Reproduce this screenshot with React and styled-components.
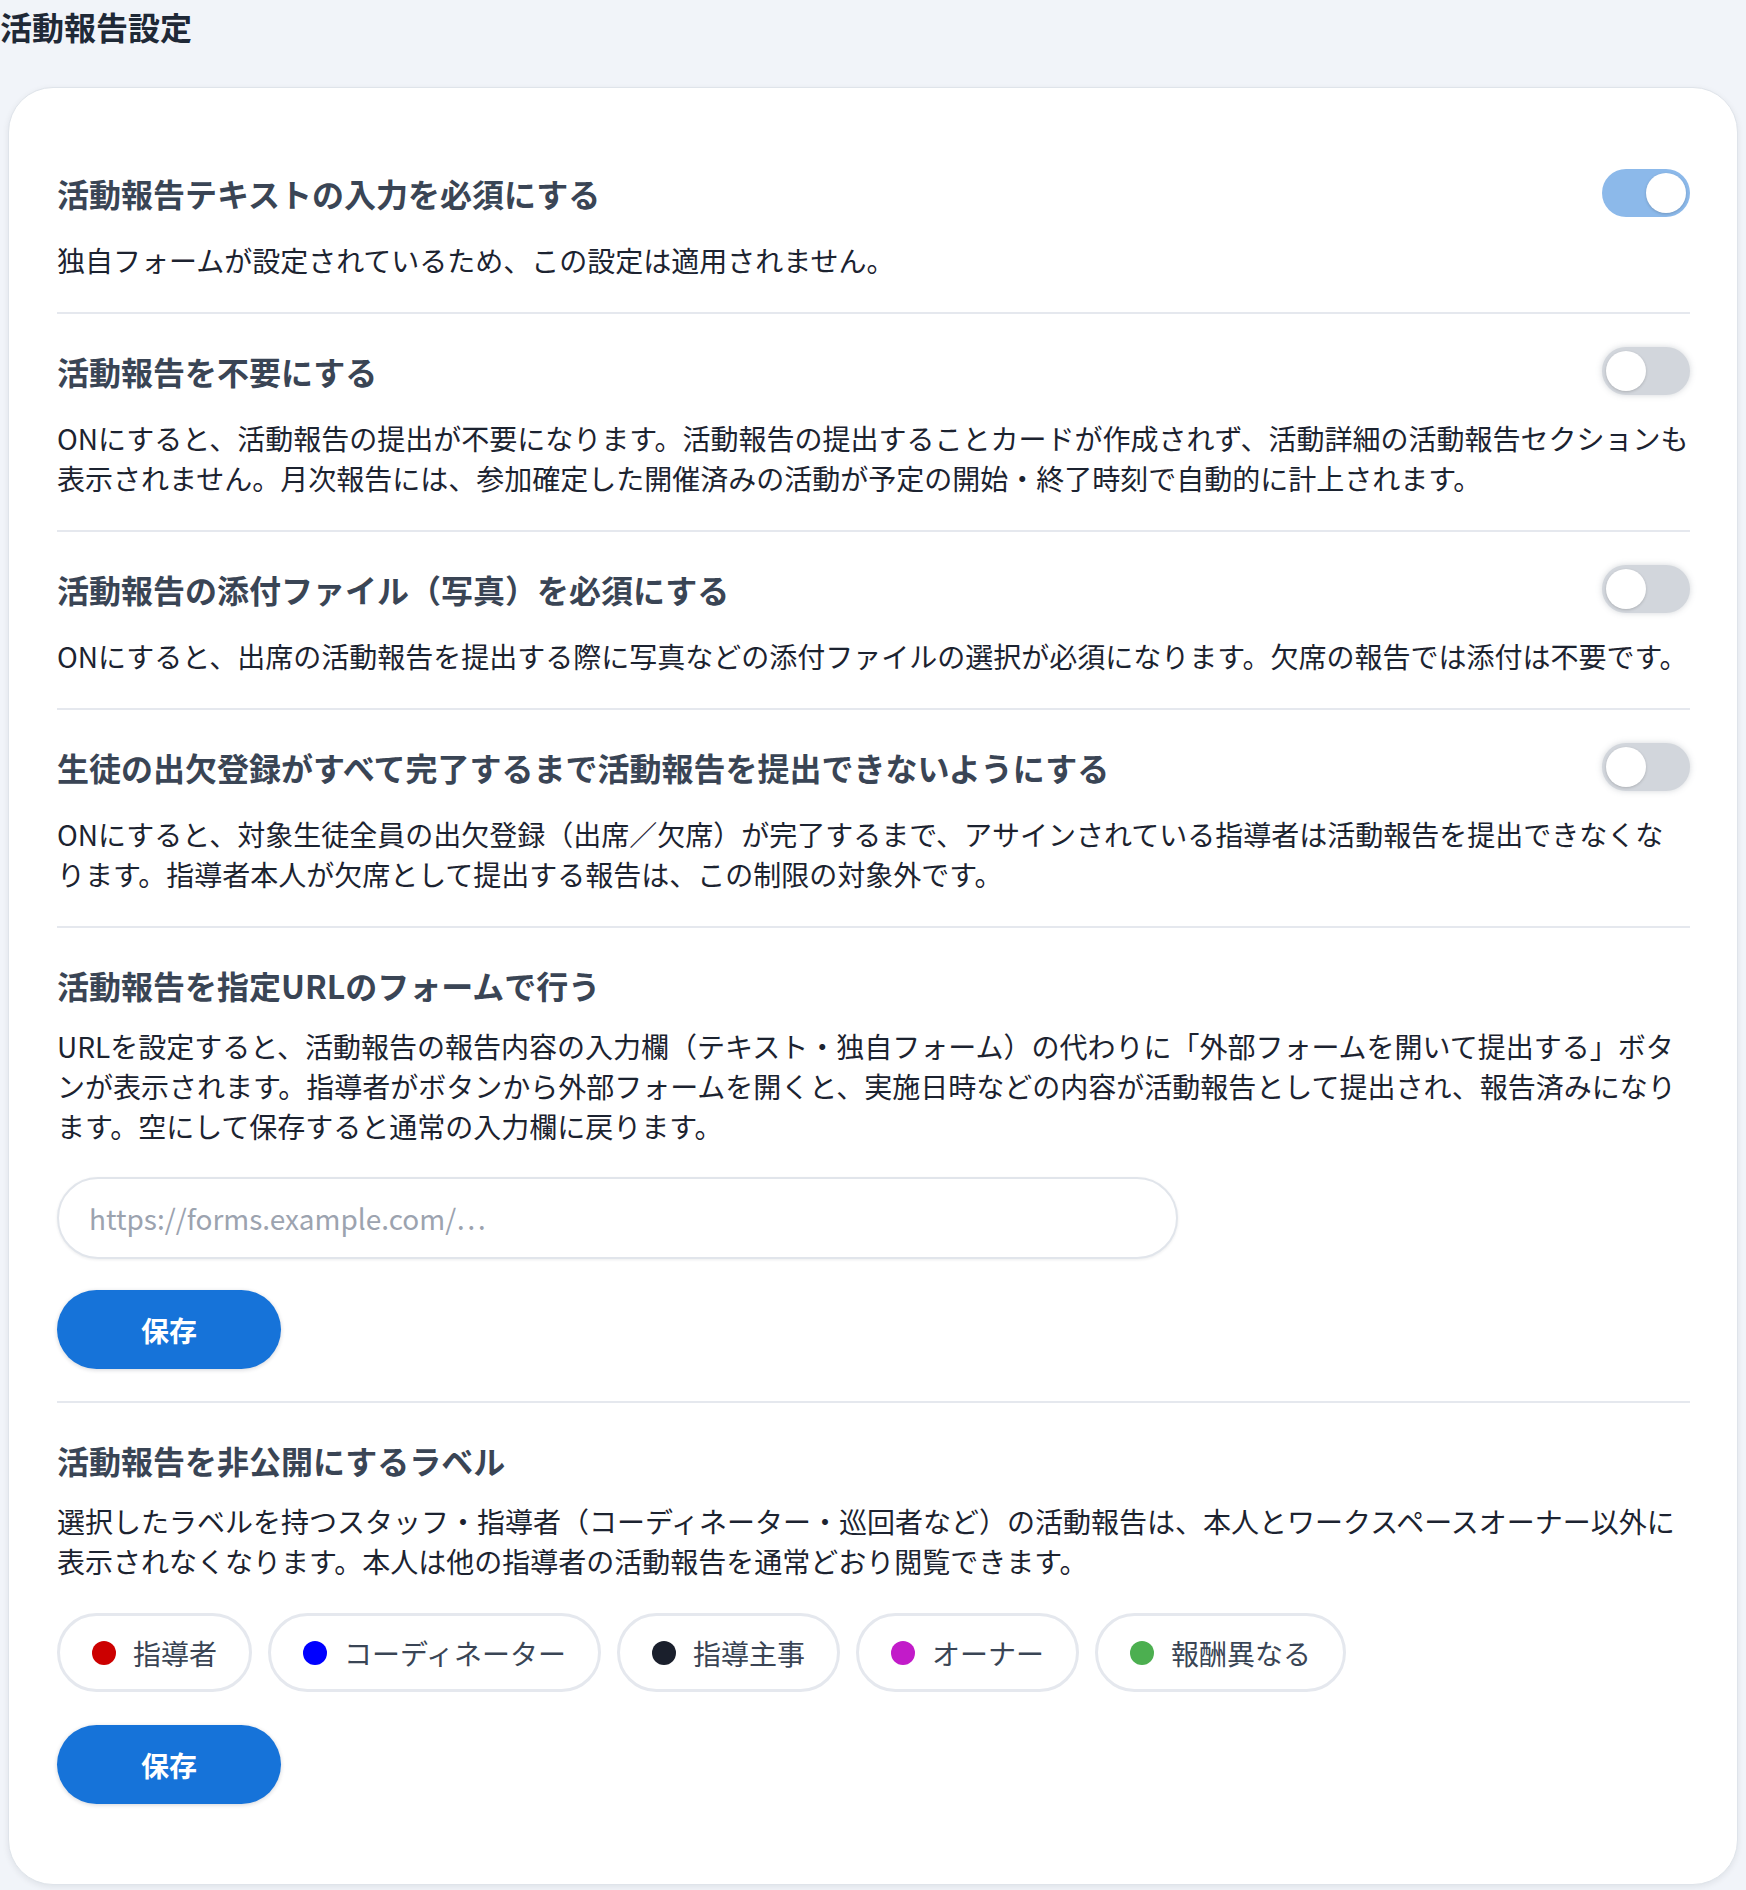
import styled, { createGlobalStyle } from "styled-components";

const GlobalStyle = createGlobalStyle`
  html, body {
    margin: 0;
    padding: 0;
    background: #f1f4f9;
  }
  body {
    font-family: "Noto Sans CJK JP", "Noto Sans", sans-serif;
    color: #1f2937;
  }
  * {
    box-sizing: border-box;
  }
`;

const Page = styled.div`
  width: 1746px;
  padding-bottom: 8px;
`;

const PageTitle = styled.h1`
  margin: 0;
  font-size: 32px;
  line-height: 52px;
  font-weight: 700;
  color: #1f2937;
`;

const Card = styled.div`
  margin: 35px 8px 0;
  padding: 48px 47px 48px 48px;
  background: #fff;
  border: 1px solid #dfe4ea;
  border-radius: 45px;
  box-shadow: 0 2px 6px rgba(15, 23, 42, 0.08);
`;

const Section = styled.section`
  padding: 33px 0 32px;
  border-bottom: ${(p) => (p.$last ? "none" : "2px solid #e5e8ee")};
`;

const HeaderRow = styled.div`
  display: flex;
  align-items: center;
  justify-content: space-between;
  min-height: 48px;
  margin-bottom: ${(p) => (p.$withToggle ? "23px" : "17px")};
`;

const Heading = styled.h2`
  margin: 0;
  font-size: 32px;
  line-height: 48px;
  font-weight: 700;
  color: #3a4555;
`;

const Description = styled.p`
  margin: 0;
  font-size: 28px;
  line-height: 40px;
  color: #1c2330;
`;

const Track = styled.div`
  position: relative;
  flex: none;
  width: 88px;
  height: 48px;
  border-radius: 24px;
  background: ${(p) => (p.$on ? "#8cb9ea" : "#d2d6dc")};
  box-shadow: ${(p) => (p.$on ? "none" : "0 0 6px rgba(100, 110, 125, 0.28)")};
`;

const Knob = styled.span`
  position: absolute;
  top: 4px;
  left: ${(p) => (p.$on ? "44px" : "4px")};
  width: 40px;
  height: 40px;
  border-radius: 50%;
  background: #fff;
  box-shadow: 0 1px 3px rgba(0, 0, 0, 0.18);
`;

const UrlInput = styled.input`
  display: block;
  width: 1121px;
  height: 82px;
  margin-top: 31px;
  padding: 0 30px;
  border: 2px solid #e1e5eb;
  border-radius: 41px;
  background: #fff;
  font-family: "Noto Sans CJK JP", "Noto Sans", sans-serif;
  font-size: 28px;
  color: #1f2937;
  box-shadow: 0 1px 3px rgba(15, 23, 42, 0.08);
  outline: none;

  &::placeholder {
    color: #9ca3af;
  }
`;

const SaveButton = styled.button`
  display: block;
  width: 224px;
  height: 79px;
  margin-top: ${(p) => p.$mt || "31px"};
  border: none;
  border-radius: 40px;
  background: #1673d9;
  color: #fff;
  font-family: "Noto Sans CJK JP", "Noto Sans", sans-serif;
  font-size: 28px;
  font-weight: 700;
  box-shadow: 0 1px 4px rgba(15, 23, 42, 0.18);
  cursor: pointer;
`;

const ChipRow = styled.div`
  display: flex;
  flex-wrap: wrap;
  gap: 16px;
  margin-top: 32px;
`;

const Chip = styled.div`
  display: flex;
  align-items: center;
  gap: 17px;
  height: 79px;
  padding: 0 32px;
  border: 3px solid #e5e8ee;
  border-radius: 40px;
  background: #fff;
  font-size: 28px;
  color: #3a4555;
`;

const Dot = styled.span`
  width: 24px;
  height: 24px;
  border-radius: 50%;
  background: ${(p) => p.$color};
`;

function Toggle({ on }) {
  return (
    <Track $on={on}>
      <Knob $on={on} />
    </Track>
  );
}

const toggles = [
  {
    title: "活動報告テキストの入力を必須にする",
    on: true,
    text: "独自フォームが設定されているため、この設定は適用されません。",
  },
  {
    title: "活動報告を不要にする",
    on: false,
    text: "ONにすると、活動報告の提出が不要になります。活動報告の提出することカードが作成されず、活動詳細の活動報告セクションも表示されません。月次報告には、参加確定した開催済みの活動が予定の開始・終了時刻で自動的に計上されます。",
  },
  {
    title: "活動報告の添付ファイル（写真）を必須にする",
    on: false,
    text: "ONにすると、出席の活動報告を提出する際に写真などの添付ファイルの選択が必須になります。欠席の報告では添付は不要です。",
  },
  {
    title: "生徒の出欠登録がすべて完了するまで活動報告を提出できないようにする",
    on: false,
    text: "ONにすると、対象生徒全員の出欠登録（出席／欠席）が完了するまで、アサインされている指導者は活動報告を提出できなくなります。指導者本人が欠席として提出する報告は、この制限の対象外です。",
  },
];

const labels = [
  { name: "指導者", color: "#cc0000" },
  { name: "コーディネーター", color: "#0000ff" },
  { name: "指導主事", color: "#1a1f2c" },
  { name: "オーナー", color: "#c21bc9" },
  { name: "報酬異なる", color: "#4caf50" },
];

export default function App() {
  return (
    <Page>
      <GlobalStyle />
      <PageTitle>活動報告設定</PageTitle>
      <Card>
        {toggles.map((t) => (
          <Section key={t.title}>
            <HeaderRow $withToggle>
              <Heading>{t.title}</Heading>
              <Toggle on={t.on} />
            </HeaderRow>
            <Description>{t.text}</Description>
          </Section>
        ))}

        <Section>
          <HeaderRow>
            <Heading>活動報告を指定URLのフォームで行う</Heading>
          </HeaderRow>
          <Description>
            URLを設定すると、活動報告の報告内容の入力欄（テキスト・独自フォーム）の代わりに「外部フォームを開いて提出する」ボタンが表示されます。指導者がボタンから外部フォームを開くと、実施日時などの内容が活動報告として提出され、報告済みになります。空にして保存すると通常の入力欄に戻ります。
          </Description>
          <UrlInput type="text" placeholder="https://forms.example.com/…" />
          <SaveButton>保存</SaveButton>
        </Section>

        <Section $last>
          <HeaderRow>
            <Heading>活動報告を非公開にするラベル</Heading>
          </HeaderRow>
          <Description>
            選択したラベルを持つスタッフ・指導者（コーディネーター・巡回者など）の活動報告は、本人とワークスペースオーナー以外に表示されなくなります。本人は他の指導者の活動報告を通常どおり閲覧できます。
          </Description>
          <ChipRow>
            {labels.map((l) => (
              <Chip key={l.name}>
                <Dot $color={l.color} />
                {l.name}
              </Chip>
            ))}
          </ChipRow>
          <SaveButton $mt="33px">保存</SaveButton>
        </Section>
      </Card>
    </Page>
  );
}
